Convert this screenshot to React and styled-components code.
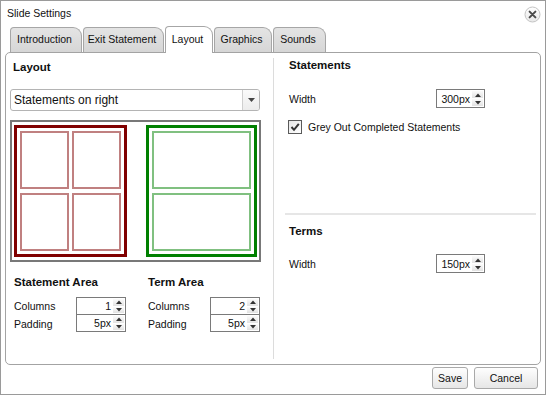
import React from "react";
import styled, { createGlobalStyle } from "styled-components";

const Global = createGlobalStyle`
  html, body { margin: 0; padding: 0; background: #fff; }
  body {
    font-family: "Liberation Sans", Arial, sans-serif;
    font-size: 10.5px;
    color: #000;
  }
  * { box-sizing: border-box; }
`;

const Window = styled.div`
  width: 546px;
  height: 395px;
  border: 1px solid #9a9a9a;
  background: #fff;
  display: flex;
  flex-direction: column;
`;

const TitleBar = styled.div`
  height: 25px;
  flex: none;
  display: flex;
  align-items: center;
  justify-content: space-between;
  padding: 0 4px 2px 6px;
`;

const Title = styled.span`
  font-size: 10.5px;
  color: #111;
`;

const CloseBtn = styled.button`
  width: 17px;
  height: 17px;
  padding: 0;
  margin-top: 3px;
  border: none;
  background: none;
  display: flex;
`;

const TabStrip = styled.div`
  height: 26px;
  flex: none;
  display: flex;
  align-items: flex-end;
  gap: 1px;
  padding-left: 9px;
`;

const Tab = styled.div`
  width: ${(p) => p.$w}px;
  height: ${(p) => (p.$active ? 27 : 25)}px;
  margin-bottom: ${(p) => (p.$active ? -1 : 0)}px;
  position: ${(p) => (p.$active ? "relative" : "static")};
  z-index: ${(p) => (p.$active ? 1 : "auto")};
  border: 1px solid #a6a6a6;
  border-bottom: none;
  border-radius: 4px 9px 0 0;
  background: ${(p) =>
    p.$active ? "#fff" : "linear-gradient(#e4e4e4, #d6d6d6)"};
  display: flex;
  align-items: center;
  justify-content: center;
  padding: 0 3px ${(p) => (p.$active ? 3 : 2)}px 0;
  font-size: 10.5px;
  color: #111;
  white-space: nowrap;
`;

const Panel = styled.div`
  height: 313px;
  flex: none;
  margin: 0 4px;
  border: 1px solid #a3a3a3;
  border-radius: 5px;
  background: #fff;
  display: grid;
  grid-template-columns: 267px 1px 1fr;
`;

const LeftCol = styled.div`
  padding: 6px 12px 0 4px;
  display: flex;
  flex-direction: column;
`;

const RightCol = styled.div`
  padding: 4px 4px 0 11px;
  display: flex;
  flex-direction: column;
`;

const Divider = styled.div`
  background: #dcdcdc;
  margin: 5px 0 5px;
`;

const Heading = styled.div`
  font-weight: bold;
  font-size: 11.5px;
  line-height: 16px;
  margin-left: ${(p) => p.$indent || 0}px;
  color: #111;
`;

const Select = styled.div`
  margin-top: 14px;
  height: 22px;
  width: 250px;
  border: 1px solid #b4b4b4;
  border-radius: 3px;
  display: flex;
  background: #fff;
`;

const SelectText = styled.div`
  flex: 1;
  font-size: 12px;
  line-height: 20px;
  padding-left: 3px;
  color: #111;
`;

const SelectArrow = styled.div`
  width: 17px;
  border-left: 1px solid #cfcfcf;
  border-radius: 0 2px 2px 0;
  background: linear-gradient(#fafafa, #ececec);
  display: flex;
  align-items: center;
  justify-content: center;
`;

const Preview = styled.div`
  margin-top: 9px;
  width: 251px;
  height: 142px;
  border: 2px solid #787878;
  padding: 3px 2px;
  display: flex;
  justify-content: space-between;
`;

const AreaBox = styled.div`
  width: ${(p) => p.$w}px;
  height: 100%;
  border: 3px solid ${(p) => p.$color};
  padding: 3px;
  display: grid;
  grid-template-columns: repeat(${(p) => p.$cols}, 1fr);
  grid-template-rows: 1fr 1fr;
  column-gap: 3px;
  row-gap: 4px;
`;

const Cell = styled.div`
  border: 2px solid ${(p) => p.$color};
`;

const Areas = styled.div`
  margin-top: 12px;
  padding-left: 4px;
  display: grid;
  grid-template-columns: 112px 112px;
  column-gap: 22px;
`;

const FieldGrid = styled.div`
  margin-top: 7px;
  display: grid;
  grid-template-columns: 62px 50px;
  align-items: center;
`;

const Label = styled.span`
  font-size: 10.5px;
  color: #111;
`;

const SpinBox = styled.div`
  width: ${(p) => p.$w}px;
  height: ${(p) => p.$h}px;
  border: 1px solid #7a7a7a;
  border-top: ${(p) => (p.$first ? "1px solid #7a7a7a" : "none")};
  display: flex;
  background: #fff;
`;

const SpinValue = styled.div`
  flex: 1;
  display: flex;
  align-items: center;
  justify-content: flex-end;
  padding-right: 2px;
  font-size: 10.5px;
  color: #111;
`;

const SpinArrows = styled.div`
  width: 12px;
  display: flex;
  flex-direction: column;
  gap: 1px;
  padding: 1px 1px 1px 0;
`;

const SpinBtn = styled.div`
  flex: 1;
  background: linear-gradient(#fbfbfb, #e2e2e2);
  display: flex;
  align-items: center;
  justify-content: center;
`;

const Section = styled.div`
  padding-left: 4px;
  display: flex;
  flex-direction: column;
`;

const FieldRow = styled.div`
  margin-top: ${(p) => p.$mt}px;
  display: grid;
  grid-template-columns: 147px auto;
  align-items: center;
`;

const CheckRow = styled.label`
  margin-top: 12px;
  height: 14px;
  display: flex;
  align-items: center;
  gap: 6px;
  margin-left: -1px;
  font-size: 10.5px;
  color: #111;
`;

const CheckBox = styled.span`
  width: 14px;
  height: 14px;
  border: 1px solid #5a5a5a;
  background: linear-gradient(135deg, #e6e6e6, #ffffff);
  display: flex;
  align-items: center;
  justify-content: center;
`;

const Separator = styled.div`
  margin-top: 79px;
  height: 2px;
  background: #e6e6e6;
  margin-right: 0;
`;

const TermsHeading = styled(Heading)`
  margin-top: 8px;
  margin-left: 4px;
`;

const Footer = styled.div`
  flex: 1;
  display: flex;
  justify-content: flex-end;
  align-items: flex-start;
  gap: 6px;
  padding: 2px 7px 0 0;
`;

const Button = styled.button`
  height: 22px;
  min-width: ${(p) => (p.$wide ? 64 : 32)}px;
  padding: 0 5px;
  border: 1px solid #a9a9a9;
  border-radius: 3px;
  background: linear-gradient(#fefefe, #e6e6e6);
  font-family: "Liberation Sans", Arial, sans-serif;
  font-size: 10.5px;
  color: #111;
`;

const Up = () => (
  <svg width="6" height="4" viewBox="0 0 6 4">
    <path d="M0 4 L3 0.5 L6 4 Z" fill="#333" />
  </svg>
);
const Down = () => (
  <svg width="6" height="4" viewBox="0 0 6 4">
    <path d="M0 0 L3 3.5 L6 0 Z" fill="#333" />
  </svg>
);

const Spinner = ({ value, w = 50, h = 18, first = true }) => (
  <SpinBox $w={w} $h={h} $first={first}>
    <SpinValue>{value}</SpinValue>
    <SpinArrows>
      <SpinBtn>
        <Up />
      </SpinBtn>
      <SpinBtn>
        <Down />
      </SpinBtn>
    </SpinArrows>
  </SpinBox>
);

const AreaFields = ({ title, cols, pad }) => (
  <div>
    <Heading>{title}</Heading>
    <FieldGrid>
      <Label>Columns</Label>
      <Spinner value={cols} />
      <Label>Padding</Label>
      <Spinner value={pad} h={17} first={false} />
    </FieldGrid>
  </div>
);

const RED_DARK = "#800000";
const RED_LIGHT = "#c08080";
const GREEN_DARK = "#008000";
const GREEN_LIGHT = "#80c080";

export default function App() {
  const tabs = [
    { t: "Introduction", w: 72 },
    { t: "Exit Statement", w: 81 },
    { t: "Layout", w: 48, active: true },
    { t: "Graphics", w: 58 },
    { t: "Sounds", w: 53 },
  ];
  return (
    <>
      <Global />
      <Window>
        <TitleBar>
          <Title>Slide Settings</Title>
          <CloseBtn aria-label="Close">
            <svg width="17" height="17" viewBox="0 0 17 17">
              <defs>
                <linearGradient id="cg" x1="0" y1="0" x2="0" y2="1">
                  <stop offset="0" stopColor="#ffffff" />
                  <stop offset="1" stopColor="#e8e8e8" />
                </linearGradient>
              </defs>
              <circle cx="8.5" cy="8.5" r="7.5" fill="url(#cg)" stroke="#c4c4c4" />
              <path
                d="M5.6 5.6 L11.4 11.4 M11.4 5.6 L5.6 11.4"
                stroke="#4a4a4a"
                strokeWidth="2"
                strokeLinecap="round"
              />
            </svg>
          </CloseBtn>
        </TitleBar>
        <TabStrip>
          {tabs.map((tb) => (
            <Tab key={tb.t} $w={tb.w} $active={tb.active}>
              {tb.t}
            </Tab>
          ))}
        </TabStrip>
        <Panel>
          <LeftCol>
            <Heading $indent={3}>Layout</Heading>
            <Select>
              <SelectText>Statements on right</SelectText>
              <SelectArrow>
                <svg width="7" height="4" viewBox="0 0 7 4">
                  <path d="M0 0 L3.5 4 L7 0 Z" fill="#444" />
                </svg>
              </SelectArrow>
            </Select>
            <Preview>
              <AreaBox $w={113} $color={RED_DARK} $cols={2}>
                <Cell $color={RED_LIGHT} />
                <Cell $color={RED_LIGHT} />
                <Cell $color={RED_LIGHT} />
                <Cell $color={RED_LIGHT} />
              </AreaBox>
              <AreaBox $w={111} $color={GREEN_DARK} $cols={1}>
                <Cell $color={GREEN_LIGHT} />
                <Cell $color={GREEN_LIGHT} />
              </AreaBox>
            </Preview>
            <Areas>
              <AreaFields title="Statement Area" cols="1" pad="5px" />
              <AreaFields title="Term Area" cols="2" pad="5px" />
            </Areas>
          </LeftCol>
          <Divider />
          <RightCol>
            <Section>
              <Heading>Statements</Heading>
              <FieldRow $mt={16}>
                <Label>Width</Label>
                <Spinner value="300px" w={49} h={19} />
              </FieldRow>
              <CheckRow>
                <CheckBox>
                  <svg width="10" height="10" viewBox="0 0 10 10">
                    <path
                      d="M1.5 5 L4 7.8 L8.8 1.8"
                      fill="none"
                      stroke="#333"
                      strokeWidth="2"
                    />
                  </svg>
                </CheckBox>
                Grey Out Completed Statements
              </CheckRow>
            </Section>
            <Separator />
            <TermsHeading>Terms</TermsHeading>
            <Section>
              <FieldRow $mt={15}>
                <Label>Width</Label>
                <Spinner value="150px" w={49} h={19} />
              </FieldRow>
            </Section>
          </RightCol>
        </Panel>
        <Footer>
          <Button>Save</Button>
          <Button $wide>Cancel</Button>
        </Footer>
      </Window>
    </>
  );
}
